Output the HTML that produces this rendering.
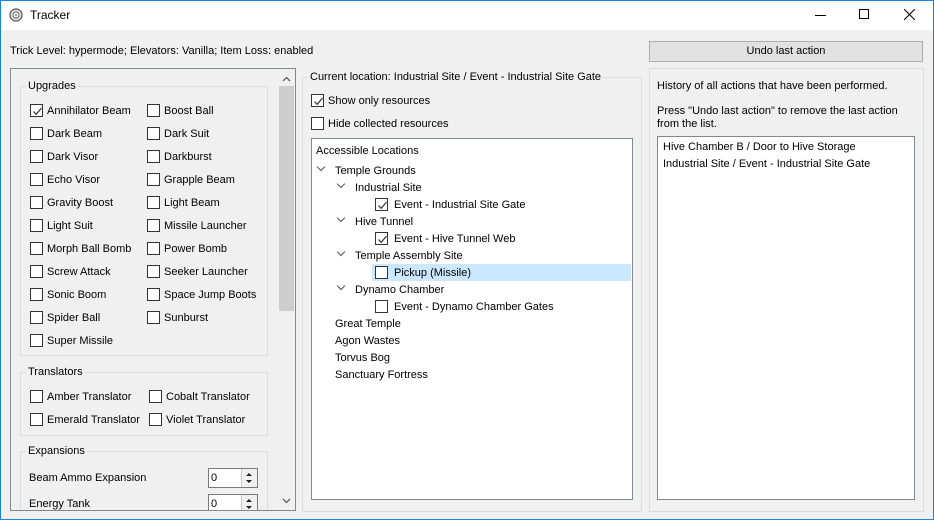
<!DOCTYPE html>
<html><head><style>
*{margin:0;padding:0;box-sizing:border-box}
body{width:934px;height:520px;background:#f0f0f0;font-family:"Liberation Sans",sans-serif;font-size:11px;color:#000;position:relative;overflow:hidden}
.a{position:absolute;white-space:nowrap}
.t{position:absolute;white-space:nowrap;line-height:14px}
.cb{position:absolute;width:13px;height:13px;border:1px solid #333;background:#fff}
.cb svg{position:absolute;left:1px;top:1px}
.gb{position:absolute;border:1px solid #dcdcdc}
.gt{position:absolute;background:#f0f0f0;padding:0 2px;line-height:14px}
.wb{position:absolute;background:#fff;border:1px solid #828790}
.ar{position:absolute;width:6px;height:6px;border-right:1.3px solid #555;border-bottom:1.3px solid #555;transform:rotate(45deg)}
</style></head><body>
<div class="a" style="left:0;top:0;width:934px;height:30px;background:#fff"></div>
<svg class="a" style="left:9px;top:8px" width="14" height="14"><circle cx="7" cy="7" r="6" fill="#ddd" stroke="#555" stroke-width="1.2"/><circle cx="7" cy="7" r="3" fill="#fff" stroke="#666"/><circle cx="7" cy="7" r="1.3" fill="#aa9"/></svg>
<div class="t" style="left:30px;top:8px;font-size:12px">Tracker</div>
<div class="a" style="left:815px;top:15px;width:11px;height:1px;background:#000"></div>
<div class="a" style="left:859px;top:9px;width:10px;height:10px;border:1px solid #000"></div>
<svg class="a" style="left:904px;top:9px" width="11" height="11"><path d="M0 0L11 11M11 0L0 11" stroke="#000" stroke-width="1"/></svg>

<div class="t" style="left:10px;top:44px">Trick Level: hypermode; Elevators: Vanilla; Item Loss: enabled</div>
<div class="a" style="left:649px;top:41px;width:274px;height:21px;background:#e1e1e1;border:1px solid #adadad;text-align:center;line-height:19px">Undo last action</div>

<div class="a" style="left:10px;top:68px;width:286px;height:443px;border:1px solid #828790;background:#f0f0f0"></div>
<div class="a" style="left:278px;top:69px;width:17px;height:441px;background:#f0f0f0"></div>
<div class="a" style="left:279px;top:86px;width:15px;height:225px;background:#cdcdcd"></div>
<svg class="a" style="left:282px;top:76px" width="9" height="6"><path d="M1 5L4.5 1.5L8 5" stroke="#606060" stroke-width="1.3" fill="none"/></svg>
<svg class="a" style="left:282px;top:498px" width="9" height="6"><path d="M1 1L4.5 4.5L8 1" stroke="#606060" stroke-width="1.3" fill="none"/></svg>

<div class="gb" style="left:20px;top:86px;width:248px;height:270px"></div>
<div class="gt" style="left:26px;top:79px">Upgrades</div>
<div class="gb" style="left:20px;top:372px;width:248px;height:64px"></div>
<div class="gt" style="left:26px;top:365px">Translators</div>
<div class="gb" style="left:20px;top:451px;width:248px;height:59px;border-bottom:none"></div>
<div class="gt" style="left:26px;top:444px">Expansions</div>

<div class="cb" style="left:30px;top:104px"><svg width="11" height="11"><path d="M1.5 5.5L4.2 8.3L9.5 2" stroke="#333" stroke-width="1.2" fill="none"/></svg></div><div class="t" style="left:47px;top:104px">Annihilator Beam</div>
<div class="cb" style="left:147px;top:104px"></div><div class="t" style="left:164px;top:104px">Boost Ball</div>
<div class="cb" style="left:30px;top:127px"></div><div class="t" style="left:47px;top:127px">Dark Beam</div>
<div class="cb" style="left:147px;top:127px"></div><div class="t" style="left:164px;top:127px">Dark Suit</div>
<div class="cb" style="left:30px;top:150px"></div><div class="t" style="left:47px;top:150px">Dark Visor</div>
<div class="cb" style="left:147px;top:150px"></div><div class="t" style="left:164px;top:150px">Darkburst</div>
<div class="cb" style="left:30px;top:173px"></div><div class="t" style="left:47px;top:173px">Echo Visor</div>
<div class="cb" style="left:147px;top:173px"></div><div class="t" style="left:164px;top:173px">Grapple Beam</div>
<div class="cb" style="left:30px;top:196px"></div><div class="t" style="left:47px;top:196px">Gravity Boost</div>
<div class="cb" style="left:147px;top:196px"></div><div class="t" style="left:164px;top:196px">Light Beam</div>
<div class="cb" style="left:30px;top:219px"></div><div class="t" style="left:47px;top:219px">Light Suit</div>
<div class="cb" style="left:147px;top:219px"></div><div class="t" style="left:164px;top:219px">Missile Launcher</div>
<div class="cb" style="left:30px;top:242px"></div><div class="t" style="left:47px;top:242px">Morph Ball Bomb</div>
<div class="cb" style="left:147px;top:242px"></div><div class="t" style="left:164px;top:242px">Power Bomb</div>
<div class="cb" style="left:30px;top:265px"></div><div class="t" style="left:47px;top:265px">Screw Attack</div>
<div class="cb" style="left:147px;top:265px"></div><div class="t" style="left:164px;top:265px">Seeker Launcher</div>
<div class="cb" style="left:30px;top:288px"></div><div class="t" style="left:47px;top:288px">Sonic Boom</div>
<div class="cb" style="left:147px;top:288px"></div><div class="t" style="left:164px;top:288px">Space Jump Boots</div>
<div class="cb" style="left:30px;top:311px"></div><div class="t" style="left:47px;top:311px">Spider Ball</div>
<div class="cb" style="left:147px;top:311px"></div><div class="t" style="left:164px;top:311px">Sunburst</div>
<div class="cb" style="left:30px;top:334px"></div><div class="t" style="left:47px;top:334px">Super Missile</div>

<div class="cb" style="left:30px;top:390px"></div><div class="t" style="left:47px;top:390px">Amber Translator</div>
<div class="cb" style="left:149px;top:390px"></div><div class="t" style="left:166px;top:390px">Cobalt Translator</div>
<div class="cb" style="left:30px;top:413px"></div><div class="t" style="left:47px;top:413px">Emerald Translator</div>
<div class="cb" style="left:149px;top:413px"></div><div class="t" style="left:166px;top:413px">Violet Translator</div>

<div class="t" style="left:29px;top:471px">Beam Ammo Expansion</div>
<div class="a" style="left:208px;top:468px;width:50px;height:20px;border:1px solid #7a7a7a;background:#fff;padding-left:2px;line-height:18px">0</div>
<div class="a" style="left:241px;top:469px;width:16px;height:18px;background:#f0f0f0;border-left:1px solid #ccc"></div>
<div class="t" style="left:29px;top:497px">Energy Tank</div>
<div class="a" style="left:208px;top:494px;width:50px;height:16px;border:1px solid #7a7a7a;border-bottom:none;background:#fff;padding-left:2px;line-height:18px">0</div>
<div class="a" style="left:241px;top:495px;width:16px;height:15px;background:#f0f0f0;border-left:1px solid #ccc"></div>
<svg class="a" style="left:245px;top:471px" width="8" height="14"><path d="M1 5L4 2L7 5Z M1 9L4 12L7 9Z" fill="#222"/></svg>
<svg class="a" style="left:245px;top:497px" width="8" height="13"><path d="M1 5L4 2L7 5Z M1 9L4 12L7 9Z" fill="#222"/></svg>

<div class="gb" style="left:302px;top:77px;width:340px;height:435px"></div>
<div class="gt" style="left:308px;top:70px">Current location: Industrial Site / Event - Industrial Site Gate</div>
<div class="cb" style="left:311px;top:94px"><svg width="11" height="11"><path d="M1.5 5.5L4.2 8.3L9.5 2" stroke="#333" stroke-width="1.2" fill="none"/></svg></div><div class="t" style="left:328px;top:94px">Show only resources</div>
<div class="cb" style="left:311px;top:117px"></div><div class="t" style="left:328px;top:117px">Hide collected resources</div>
<div class="wb" style="left:311px;top:138px;width:322px;height:362px"></div>
<div class="a" style="left:372px;top:264px;width:259px;height:17px;background:#cce8ff"></div>
<div class="t" style="left:316px;top:144px">Accessible Locations</div>
<div class="ar" style="left:318px;top:164px"></div><div class="t" style="left:335px;top:164px">Temple Grounds</div>
<div class="ar" style="left:338px;top:181px"></div><div class="t" style="left:355px;top:181px">Industrial Site</div>
<div class="cb" style="left:375px;top:198px"><svg width="11" height="11"><path d="M1.5 5.5L4.2 8.3L9.5 2" stroke="#333" stroke-width="1.2" fill="none"/></svg></div><div class="t" style="left:394px;top:198px">Event - Industrial Site Gate</div>
<div class="ar" style="left:338px;top:215px"></div><div class="t" style="left:355px;top:215px">Hive Tunnel</div>
<div class="cb" style="left:375px;top:232px"><svg width="11" height="11"><path d="M1.5 5.5L4.2 8.3L9.5 2" stroke="#333" stroke-width="1.2" fill="none"/></svg></div><div class="t" style="left:394px;top:232px">Event - Hive Tunnel Web</div>
<div class="ar" style="left:338px;top:249px"></div><div class="t" style="left:355px;top:249px">Temple Assembly Site</div>
<div class="cb" style="left:375px;top:266px"></div><div class="t" style="left:394px;top:266px">Pickup (Missile)</div>
<div class="ar" style="left:338px;top:283px"></div><div class="t" style="left:355px;top:283px">Dynamo Chamber</div>
<div class="cb" style="left:375px;top:300px"></div><div class="t" style="left:394px;top:300px">Event - Dynamo Chamber Gates</div>
<div class="t" style="left:335px;top:317px">Great Temple</div>
<div class="t" style="left:335px;top:334px">Agon Wastes</div>
<div class="t" style="left:335px;top:351px">Torvus Bog</div>
<div class="t" style="left:335px;top:368px">Sanctuary Fortress</div>

<div class="gb" style="left:649px;top:68px;width:275px;height:444px"></div>
<div class="t" style="left:657px;top:79px">History of all actions that have been performed.</div>
<div class="t" style="left:657px;top:104px">Press "Undo last action" to remove the last action</div>
<div class="t" style="left:657px;top:117px">from the list.</div>
<div class="wb" style="left:657px;top:136px;width:258px;height:364px"></div>
<div class="t" style="left:663px;top:140px">Hive Chamber B / Door to Hive Storage</div>
<div class="t" style="left:663px;top:157px">Industrial Site / Event - Industrial Site Gate</div>

<div class="a" style="left:0;top:0;width:934px;height:520px;border:1px solid #1883d7"></div>
</body></html>
